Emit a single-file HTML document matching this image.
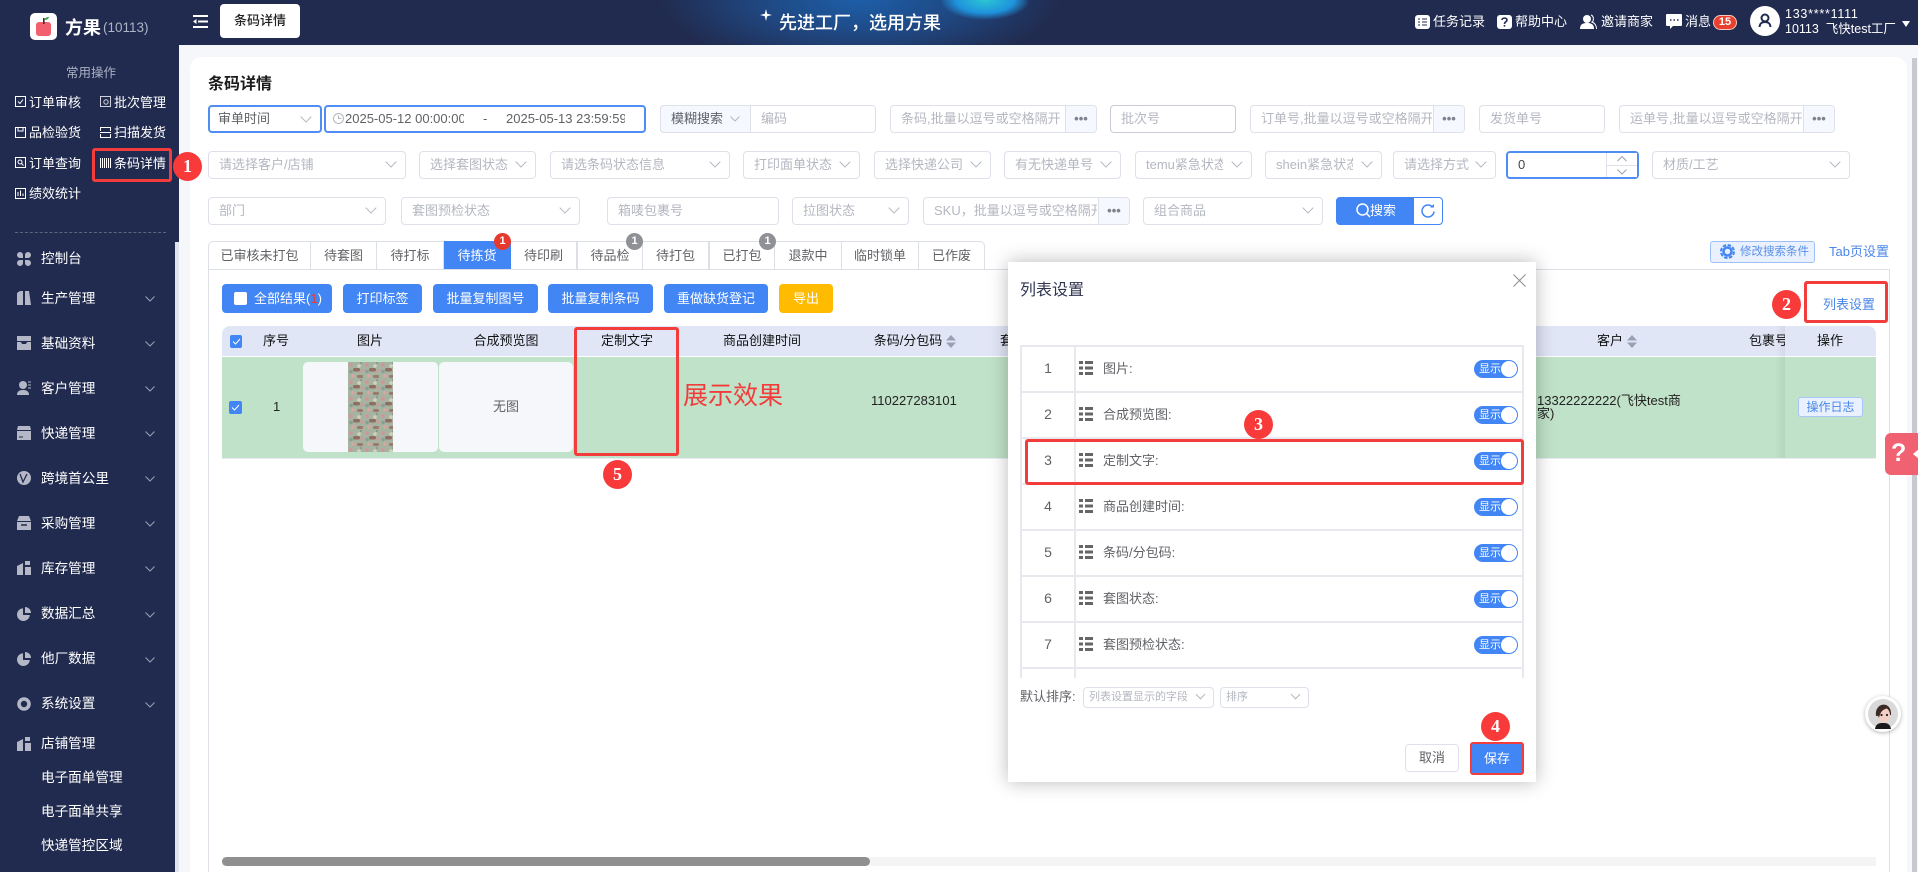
<!DOCTYPE html>
<html lang="zh"><head><meta charset="utf-8"><title>条码详情</title>
<style>
html,body{margin:0;padding:0;width:1918px;height:872px;overflow:hidden;background:#f5f7fb}
body{position:relative;font-family:"Liberation Sans","Noto Sans CJK SC",sans-serif;font-size:13px;color:#222}
div,span,svg{box-sizing:border-box}
.a{position:absolute;white-space:nowrap}
.t{position:absolute;white-space:nowrap;line-height:18px}
.q{color:#fff;font-size:13px}
.n{color:#fff;font-size:13.6px;margin-top:1px}
.f{position:absolute;height:28px;background:#fff;border:1px solid #dfe1ea;border-radius:4px;color:#b4b7c0;font-size:13px;line-height:26px;padding-left:10px;white-space:nowrap;overflow:hidden}
.f.s::after{content:"";position:absolute;right:10px;top:6px;width:7px;height:7px;border-right:1px solid #b4b7c0;border-bottom:1px solid #b4b7c0;transform:rotate(45deg);background:#fff}
.f.sm{height:21px;font-size:11px;line-height:19px;padding-left:5px}
.f.sm::after{top:3px;right:9px;width:6px;height:6px}
.mask{position:absolute;right:0;top:0;bottom:0;width:32px;background:#fff}
.d{position:absolute;top:0;bottom:0;right:0;width:31px;background:#f5f8ff;border-left:1px solid #dfe1ea;color:#80838e;font-size:13px;font-weight:bold;line-height:26px;text-align:center;letter-spacing:0}
.b{position:absolute;top:284px;height:29px;background:#4285f4;border-radius:4px;color:#fff;font-size:13px;line-height:29px;text-align:center}
.tab{position:absolute;top:241px;height:29px;border:1px solid #dcdfe6;border-left:0;background:#fff;color:#606266;font-size:13px;line-height:27px;text-align:center}
.h{position:absolute;top:332px;line-height:18px;color:#111;font-size:13px;white-space:nowrap;transform:translateX(-50%)}
.r{position:absolute;width:29px;height:29px;border-radius:50%;background:#f83a3a;color:#fff;font:bold 18px/29px "Liberation Serif",serif;text-align:center;z-index:9}
.rb{position:absolute;border:3px solid #f33c3c;border-radius:3px;z-index:8}
.g{position:absolute;width:17px;height:17px;border-radius:50%;background:#8f9196;color:#fff;font:bold 11px/17px "Liberation Sans",sans-serif;text-align:center;z-index:3}
.row{position:absolute;left:1020px;width:504px;height:46px;border:1px solid #e8e9ee;border-width:0 2px 2px 2px;background:#fff}
.row .no{position:absolute;left:0;width:54px;top:0;height:44px;border-right:2px solid #e8e9ee;text-align:center;line-height:42px;color:#606266;font-size:14px}
.row .lb{position:absolute;left:81px;top:13px;line-height:18px;color:#606266;font-size:13px;white-space:nowrap}
.row svg{position:absolute;left:57px;top:14px}
.row .tg{position:absolute;left:452px;top:13px;width:44px;height:18px;border-radius:9px;background:#4285f4;color:#fff;font-size:11px;line-height:18px;padding-left:5px}
.row .tg i{position:absolute;right:1px;top:1px;width:16px;height:16px;border-radius:50%;background:#fff}
</style></head><body>

<!-- top bar -->
<div class="a" style="left:0;top:0;width:1918px;height:45px;background:#212b4f"></div>
<div class="a" style="left:660px;top:0;width:400px;height:45px;background:radial-gradient(ellipse 200px 70px at 50% 0,#1d5ea8 0,#1f4a86 45%,rgba(33,43,79,0) 100%)"></div>
<div class="a" style="left:940px;top:0;width:90px;height:22px;background:radial-gradient(ellipse 45px 20px at 50% 0,#2bc6d4 0,#1f93dc 65%,rgba(31,147,220,0) 100%)"></div>
<div class="t" style="left:779px;top:12px;font-size:18px;line-height:22px;color:#fff;font-weight:500">先进工厂，选用方果</div>
<svg class="a" style="left:760px;top:9px" width="12" height="12"><path d="M6 0L7.2 4.8 12 6 7.2 7.2 6 12 4.8 7.2 0 6 4.8 4.8Z" fill="#fff"/></svg>

<!-- sidebar -->
<div class="a" style="left:0;top:45px;width:175px;height:827px;background:#212b4f"></div>
<div class="a" style="left:175px;top:45px;width:4px;height:197px;background:#212b4f"></div>
<div class="a" style="left:175px;top:242px;width:4px;height:630px;background:#e0e3ee"></div>

<svg class="a" style="left:30px;top:13px" width="27" height="27"><rect width="27" height="27" rx="5" fill="#fff"/><rect x="6" y="9" width="15" height="14" rx="3" fill="#f2606e"/><rect x="13" y="5" width="1.6" height="6" fill="#333"/><path d="M14.5 7C15 4.5 17 4 19 4 18.5 6 17 7 14.5 7Z" fill="#3fa34d"/></svg>
<div class="t" style="left:65px;top:16px;font-size:18px;line-height:24px;font-weight:bold;color:#fff">方果</div>
<div class="t" style="left:103px;top:18px;font-size:13.5px;line-height:20px;color:#aeb4c8">(10113)</div>
<svg class="a" style="left:192px;top:14px" width="17" height="15"><path d="M1 2H16M6 7.5H16M1 13H16" stroke="#fff" stroke-width="2"/><path d="M4.5 5L1 7.5 4.5 10Z" fill="#fff"/></svg>
<div class="a" style="left:220px;top:4px;width:80px;height:34px;background:#fff;border-radius:4px;text-align:center;line-height:34px;font-size:13px;font-weight:500;color:#222">条码详情</div>

<div class="t" style="left:66px;top:64px;font-size:12.5px;color:#aab0c4">常用操作</div>
<svg class="a" style="left:15px;top:96px" width="11" height="11"><rect x=".5" y=".5" width="10" height="10" fill="none" stroke="#fff"/><path d="M3 5.5L5 7.5 8 3.5" fill="none" stroke="#fff"/></svg>
<div class="t q" style="left:29px;top:94px">订单审核</div>
<svg class="a" style="left:100px;top:96px" width="11" height="11"><rect x=".5" y=".5" width="10" height="10" fill="none" stroke="#cfd2dc"/><circle cx="6" cy="6" r="2.2" fill="none" stroke="#cfd2dc"/></svg>
<div class="t q" style="left:114px;top:94px">批次管理</div>
<svg class="a" style="left:15px;top:127px" width="11" height="11"><path d="M.5.5H10.5V10.5H.5ZM3 .5V4H8V.5" fill="none" stroke="#fff"/></svg>
<div class="t q" style="left:29px;top:124px">品检验货</div>
<svg class="a" style="left:100px;top:127px" width="11" height="11"><path d="M.5 4V.5H10.5V4M.5 7V10.5H10.5V7M0 5.5H11" fill="none" stroke="#fff"/></svg>
<div class="t q" style="left:114px;top:124px">扫描发货</div>
<svg class="a" style="left:15px;top:157px" width="11" height="11"><rect x=".5" y=".5" width="10" height="10" fill="none" stroke="#fff"/><circle cx="5" cy="5" r="2" fill="none" stroke="#fff"/><path d="M6.5 6.5L8.5 8.5" stroke="#fff"/></svg>
<div class="t q" style="left:29px;top:155px">订单查询</div>
<svg class="a" style="left:100px;top:158px" width="11" height="10"><path d="M.5 0V10M2.5 0V10M4.5 0V10M6.5 0V10M8.5 0V10M10.5 0V10" stroke="#fff"/></svg>
<div class="t q" style="left:114px;top:155px">条码详情</div>
<svg class="a" style="left:15px;top:188px" width="11" height="11"><rect x=".5" y=".5" width="10" height="10" fill="none" stroke="#fff"/><path d="M3 4V8M5.5 2.5V8M8 5.5V8" stroke="#fff"/></svg>
<div class="t q" style="left:29px;top:185px">绩效统计</div>
<div class="a" style="left:15px;top:232px;width:151px;height:0;border-top:1px dashed #5d6580"></div>

<div class="rb" style="left:92px;top:148px;width:80px;height:34px"></div>
<div class="r" style="left:173px;top:152px">1</div>

<svg class="a" style="left:17px;top:252px" width="14" height="14"><path d="M0 3a3 3 0 016 0v3H3a3 3 0 01-3-3ZM14 3a3 3 0 00-6 0v3h3a3 3 0 003-3ZM0 11a3 3 0 003 3 3 3 0 003-3V8H3a3 3 0 00-3 3ZM14 11a3 3 0 01-3 3 3 3 0 01-3-3V8h3a3 3 0 013 3Z" fill="#b4b8c6"/></svg>
<div class="t n" style="left:41px;top:249px">控制台</div>

<svg class="a" style="left:17px;top:291px" width="14" height="14"><path d="M0 14V2L3 0H6V14ZM8 14V0H12L14 14Z" fill="#b4b8c6"/></svg>
<div class="t n" style="left:41px;top:289px">生产管理</div>
<svg class="a" style="left:17px;top:336px" width="14" height="14"><path d="M0 0H14V5H0ZM0 6H4L5 8H9L10 6H14V14H0Z" fill="#b4b8c6"/></svg>
<div class="t n" style="left:41px;top:334px">基础资料</div>
<svg class="a" style="left:17px;top:381px" width="14" height="14"><circle cx="6" cy="4" r="4" fill="#b4b8c6"/><path d="M0 14C0 10 3 9 6 9S12 10 12 14Z" fill="#b4b8c6"/><path d="M11 1H14M11 4H14M11 7H14" stroke="#b4b8c6"/></svg>
<div class="t n" style="left:41px;top:379px">客户管理</div>
<svg class="a" style="left:17px;top:426px" width="14" height="14"><path d="M1 0H13L14 4H0ZM0 5H14V14H0Z" fill="#b4b8c6"/><path d="M2 11H6" stroke="#212b4f"/></svg>
<div class="t n" style="left:41px;top:424px">快递管理</div>
<svg class="a" style="left:17px;top:471px" width="14" height="14"><circle cx="7" cy="7" r="7" fill="#b4b8c6"/><path d="M3 3L6 11 10 3" fill="none" stroke="#212b4f" stroke-width="1.3"/></svg>
<div class="t n" style="left:41px;top:469px">跨境首公里</div>
<svg class="a" style="left:17px;top:516px" width="14" height="14"><path d="M2 0H12L14 5H0ZM0 6H14V14H0Z" fill="#b4b8c6"/><path d="M4 9H10" stroke="#212b4f" stroke-width="1.5"/></svg>
<div class="t n" style="left:41px;top:514px">采购管理</div>
<svg class="a" style="left:17px;top:561px" width="14" height="14"><path d="M0 5L6 2V14H0ZM8 0H13V4H8ZM8 6H14V14H8Z" fill="#b4b8c6"/></svg>
<div class="t n" style="left:41px;top:559px">库存管理</div>
<svg class="a" style="left:17px;top:607px" width="14" height="14"><path d="M6 1.2A6.4 6.4 0 1012.8 8H6Z" fill="#b4b8c6"/><path d="M8 0A6 6 0 0114 6H8Z" fill="#b4b8c6"/></svg>
<div class="t n" style="left:41px;top:604px">数据汇总</div>
<svg class="a" style="left:17px;top:652px" width="14" height="14"><path d="M6 1.2A6.4 6.4 0 1012.8 8H6Z" fill="#b4b8c6"/><path d="M8 0A6 6 0 0114 6H8Z" fill="#b4b8c6"/></svg>
<div class="t n" style="left:41px;top:649px">他厂数据</div>
<svg class="a" style="left:17px;top:697px" width="14" height="14"><circle cx="7" cy="7" r="5" fill="none" stroke="#b4b8c6" stroke-width="3.6"/></svg>
<div class="t n" style="left:41px;top:694px">系统设置</div>
<svg class="a" style="left:17px;top:737px" width="14" height="14"><path d="M0 5L6 2V14H0ZM8 0H13V4H8ZM8 6H14V14H8Z" fill="#b4b8c6"/></svg>
<div class="t n" style="left:41px;top:734px">店铺管理</div>
<div class="t n" style="left:41px;top:768px">电子面单管理</div>
<div class="t n" style="left:41px;top:802px">电子面单共享</div>
<div class="t n" style="left:41px;top:836px">快递管控区域</div>

<svg class="a" style="left:145px;top:296px" width="10" height="6"><path d="M.5.5L5 5 9.5.5" fill="none" stroke="#9aa0b4"/></svg>
<svg class="a" style="left:145px;top:341px" width="10" height="6"><path d="M.5.5L5 5 9.5.5" fill="none" stroke="#9aa0b4"/></svg>
<svg class="a" style="left:145px;top:386px" width="10" height="6"><path d="M.5.5L5 5 9.5.5" fill="none" stroke="#9aa0b4"/></svg>
<svg class="a" style="left:145px;top:431px" width="10" height="6"><path d="M.5.5L5 5 9.5.5" fill="none" stroke="#9aa0b4"/></svg>
<svg class="a" style="left:145px;top:476px" width="10" height="6"><path d="M.5.5L5 5 9.5.5" fill="none" stroke="#9aa0b4"/></svg>
<svg class="a" style="left:145px;top:521px" width="10" height="6"><path d="M.5.5L5 5 9.5.5" fill="none" stroke="#9aa0b4"/></svg>
<svg class="a" style="left:145px;top:566px" width="10" height="6"><path d="M.5.5L5 5 9.5.5" fill="none" stroke="#9aa0b4"/></svg>
<svg class="a" style="left:145px;top:612px" width="10" height="6"><path d="M.5.5L5 5 9.5.5" fill="none" stroke="#9aa0b4"/></svg>
<svg class="a" style="left:145px;top:657px" width="10" height="6"><path d="M.5.5L5 5 9.5.5" fill="none" stroke="#9aa0b4"/></svg>
<svg class="a" style="left:145px;top:702px" width="10" height="6"><path d="M.5.5L5 5 9.5.5" fill="none" stroke="#9aa0b4"/></svg>

<!-- top-right -->
<svg class="a" style="left:1415px;top:15px" width="15" height="14"><rect width="15" height="14" rx="3" fill="#fff"/><path d="M3 4H5M7 4H12M3 7H5M7 7H12M3 10H5M7 10H12" stroke="#212b4f"/></svg>
<div class="t q" style="left:1433px;top:13px">任务记录</div>
<svg class="a" style="left:1497px;top:15px" width="15" height="14"><rect width="15" height="14" rx="3" fill="#fff"/><path d="M5 5C5 2.5 10 2.5 10 5 10 7 7.5 6.5 7.5 9" fill="none" stroke="#212b4f" stroke-width="1.6"/><rect x="6.7" y="10" width="1.6" height="1.6" fill="#212b4f"/></svg>
<div class="t q" style="left:1515px;top:13px">帮助中心</div>
<svg class="a" style="left:1580px;top:14px" width="17" height="15"><circle cx="7" cy="5" r="4" fill="#fff"/><path d="M0 15C0 10 3 9 7 9S14 10 14 15Z" fill="#fff"/><path d="M11 1C14 2 14 7 12 8 15 9 16.500 12 16.500 15" fill="none" stroke="#fff"/></svg>
<div class="t q" style="left:1601px;top:13px">邀请商家</div>
<svg class="a" style="left:1666px;top:14px" width="16" height="16"><path d="M1 0H15Q16 0 16 1V11Q16 12 15 12H7L4 15V12H1Q0 12 0 11V1Q0 0 1 0Z" fill="#fff"/><path d="M4 6H5.500M7.500 6H9M11 6H12.500" stroke="#212b4f" stroke-width="1.5"/></svg>
<div class="t q" style="left:1685px;top:13px">消息</div>
<div class="a" style="left:1713px;top:15px;width:24px;height:15px;background:#e8402f;border:1px solid #f7c7c0;border-radius:8px;color:#fff;font-size:11px;font-weight:bold;line-height:13px;text-align:center">15</div>
<div class="a" style="left:1750px;top:6px;width:30px;height:30px;border-radius:50%;background:#fff"></div>
<svg class="a" style="left:1758px;top:13px" width="14" height="15"><circle cx="7" cy="5" r="3.500" fill="none" stroke="#212b4f" stroke-width="2"/><path d="M1.500 14C2 10 4 9 7 9S12 10 12.500 14" fill="none" stroke="#212b4f" stroke-width="2"/></svg>
<div class="t" style="left:1785px;top:6px;color:#fff;font-size:12.5px;line-height:16px;letter-spacing:.75px">133****1111</div>
<div class="t" style="left:1785px;top:21px;color:#fff;font-size:12.5px;line-height:16px">10113&nbsp; 飞快test工厂</div>
<div class="a" style="left:1902px;top:21px;width:0;height:0;border:4.500px solid transparent;border-top:6px solid #fff"></div>

<!-- main card -->
<div class="a" style="left:190px;top:57px;width:1717px;height:815px;background:#fff;border-radius:12px 12px 0 0"></div>
<div class="a" style="left:1912px;top:58px;width:5px;height:814px;background:#c8c9d0"></div>

<div class="t" style="left:208px;top:74px;font-size:16px;line-height:22px;font-weight:bold;color:#1c1c1c">条码详情</div>

<!-- row 1 -->
<div class="f s" style="left:208px;top:105px;width:114px;border:2px solid #4f8df5;color:#606266;line-height:24px;padding-left:8px">审单时间</div>
<div class="f" style="left:324px;top:105px;width:322px;border:2px solid #4f8df5"></div>
<svg class="a" style="left:333px;top:113px" width="11" height="11"><circle cx="5.500" cy="5.500" r="5" fill="none" stroke="#b4b7c0"/><path d="M5.500 2.500V5.500H8.500" fill="none" stroke="#b4b7c0"/></svg>
<div class="a" style="left:345px;top:110px;width:119px;height:18px;overflow:hidden;line-height:18px;color:#606266">2025-05-12 00:00:00</div>
<div class="t" style="left:483px;top:110px;color:#606266">-</div>
<div class="a" style="left:506px;top:110px;width:119px;height:18px;overflow:hidden;line-height:18px;color:#606266">2025-05-13 23:59:59</div>
<div class="f" style="left:660px;top:105px;width:216px;padding-left:100px">编码</div>
<div class="a" style="left:660px;top:105px;width:91px;height:28px;background:#f5f8ff;border:1px solid #dfe1ea;border-radius:4px 0 0 4px;color:#606266;line-height:26px;padding-left:10px">模糊搜索</div>
<svg class="a" style="left:730px;top:116px" width="10" height="6"><path d="M.5.5L5 5 9.5.5" fill="none" stroke="#b4b7c0"/></svg>
<div class="f" style="left:890px;top:105px;width:207px">条码,批量以逗号或空格隔开<div class="d">•••</div></div>
<div class="f" style="left:1110px;top:105px;width:126px;border-color:#c9cbd6">批次号</div>
<div class="f" style="left:1250px;top:105px;width:215px">订单号,批量以逗号或空格隔开<div class="mask"></div><div class="d">•••</div></div>
<div class="f" style="left:1479px;top:105px;width:126px">发货单号</div>
<div class="f" style="left:1619px;top:105px;width:216px">运单号,批量以逗号或空格隔开<div class="mask"></div><div class="d">•••</div></div>

<!-- row 2 -->
<div class="f s" style="left:208px;top:151px;width:198px">请选择客户/店铺</div>
<div class="f s" style="left:419px;top:151px;width:117px">选择套图状态</div>
<div class="f s" style="left:550px;top:151px;width:180px">请选条码状态信息</div>
<div class="f s" style="left:743px;top:151px;width:117px">打印面单状态</div>
<div class="f s" style="left:874px;top:151px;width:117px">选择快递公司</div>
<div class="f s" style="left:1004px;top:151px;width:117px">有无快递单号</div>
<div class="f s" style="left:1135px;top:151px;width:117px"><div class="a" style="left:10px;top:0;width:77px;overflow:hidden">temu紧急状态</div></div>
<div class="f s" style="left:1265px;top:151px;width:117px"><div class="a" style="left:10px;top:0;width:77px;overflow:hidden">shein紧急状态</div></div>
<div class="f s" style="left:1393px;top:151px;width:103px">请选择方式</div>
<div class="f" style="left:1506px;top:151px;width:133px;border:2px solid #4f8df5;color:#444;line-height:24px">0</div>
<div class="a" style="left:1606px;top:153px;width:31px;height:24px;background:#fff;border-left:1px solid #dfe1ea"></div>
<div class="a" style="left:1606px;top:165px;width:31px;height:1px;background:#dfe1ea"></div>
<svg class="a" style="left:1617px;top:156px" width="10" height="6"><path d="M.5 5L5 .5 9.500 5" fill="none" stroke="#9aa0b4"/></svg>
<svg class="a" style="left:1617px;top:169px" width="10" height="6"><path d="M.5.5L5 5 9.500.5" fill="none" stroke="#9aa0b4"/></svg>
<div class="f s" style="left:1652px;top:151px;width:198px">材质/工艺</div>

<!-- row 3 -->
<div class="f s" style="left:208px;top:197px;width:178px">部门</div>
<div class="f s" style="left:401px;top:197px;width:179px">套图预检状态</div>
<div class="f" style="left:607px;top:197px;width:172px">箱唛包裹号</div>
<div class="f s" style="left:792px;top:197px;width:117px">拉图状态</div>
<div class="f" style="left:923px;top:197px;width:207px">SKU，批量以逗号或空格隔开<div class="mask"></div><div class="d">•••</div></div>
<div class="f s" style="left:1143px;top:197px;width:180px">组合商品</div>
<div class="a" style="left:1336px;top:197px;width:77px;height:28px;background:#4285f4;border-radius:4px 0 0 4px;color:#fff;line-height:28px;padding-left:34px">搜索</div>
<svg class="a" style="left:1356px;top:203px" width="15" height="15"><circle cx="6.500" cy="6.500" r="5.500" fill="none" stroke="#fff" stroke-width="1.500"/><path d="M10.500 10.500L14 14" stroke="#fff" stroke-width="1.500"/></svg>
<div class="a" style="left:1413px;top:197px;width:30px;height:28px;background:#fff;border:1px solid #4285f4;border-radius:0 4px 4px 0"></div>
<svg class="a" style="left:1421px;top:204px" width="14" height="14"><path d="M11.500 3A6 6 0 1 0 13 7.500" fill="none" stroke="#4285f4" stroke-width="1.500"/><path d="M9 3.500H13V0Z" fill="#4285f4"/></svg>

<!-- tabs -->
<div class="tab" style="left:208px;width:103px;border-left:1px solid #dcdfe6;border-radius:5px 0 0 0">已审核未打包</div>
<div class="tab" style="left:311px;width:66px">待套图</div>
<div class="tab" style="left:377px;width:67px">待打标</div>
<div class="tab" style="left:444px;width:67px;background:#4285f4;border-color:#4285f4;color:#fff">待拣货</div>
<div class="tab" style="left:511px;width:66px">待印刷</div>
<div class="tab" style="left:577px;width:66px;border-left:1px solid #dcdfe6">待品检</div>
<div class="tab" style="left:643px;width:66px">待打包</div>
<div class="tab" style="left:709px;width:66px;border-left:1px solid #dcdfe6">已打包</div>
<div class="tab" style="left:775px;width:67px">退款中</div>
<div class="tab" style="left:842px;width:77px">临时锁单</div>
<div class="tab" style="left:919px;width:66px;border-radius:0 5px 0 0">已作废</div>
<div class="g" style="left:494px;top:233px;background:#e8392f">1</div>
<div class="g" style="left:626px;top:233px">1</div>
<div class="g" style="left:759px;top:233px">1</div>

<div class="a" style="left:1710px;top:241px;width:105px;height:22px;background:#e9f1fe;border:1px solid #9fc0f7;border-radius:3px;color:#5b8fe8;font-size:11.500px;line-height:20px;padding-left:29px">修改搜索条件</div>
<svg class="a" style="left:1720px;top:244px" width="15" height="15"><circle cx="7.500" cy="7.500" r="6.500" fill="none" stroke="#4285f4" stroke-width="2" stroke-dasharray="3.500 1.600"/><circle cx="7.500" cy="7.500" r="4" fill="none" stroke="#4285f4" stroke-width="2.500"/></svg>
<div class="t" style="left:1829px;top:243px;color:#4a86e8;font-size:13px">Tab页设置</div>

<!-- tab panel -->
<div class="a" style="left:208px;top:269px;width:1682px;height:603px;border:1px solid #dcdfe6;border-bottom:0;z-index:0"></div>

<div class="b" style="left:222px;width:110px;padding-left:22px">全部结果(<span style="color:#e8392f">1</span>)</div>
<div class="a" style="left:234px;top:292px;width:13px;height:13px;background:#fff;border-radius:2px"></div>
<div class="b" style="left:343px;width:79px">打印标签</div>
<div class="b" style="left:433px;width:105px">批量复制图号</div>
<div class="b" style="left:548px;width:105px">批量复制条码</div>
<div class="b" style="left:664px;width:104px">重做缺货登记</div>
<div class="b" style="left:779px;width:54px;background:#ffbb00">导出</div>

<!-- 列表设置 -->
<div class="rb" style="left:1804px;top:281px;width:84px;height:42px"></div>
<div class="t" style="left:1823px;top:296px;color:#4a86e8;font-size:13px">列表设置</div>
<div class="r" style="left:1772px;top:290px">2</div>

<!-- table -->
<div class="a" style="left:222px;top:326px;width:1654px;height:30px;background:#e1e6f6;border-radius:8px 8px 0 0"></div>
<div class="a" style="left:222px;top:357px;width:1654px;height:101px;background:#c0e2c8"></div>
<div class="a" style="left:222px;top:458px;width:1654px;height:1px;background:#e8ebf2"></div>
<div class="a" style="left:1775px;top:326px;width:10px;height:132px;background:linear-gradient(90deg,rgba(0,0,0,0),rgba(0,0,0,.06))"></div>

<div class="a" style="left:230px;top:335px;width:12px;height:13px;background:#4285f4;border-radius:2px"></div>
<svg class="a" style="left:232px;top:338px" width="9" height="7"><path d="M1 3.500L3.500 6 8 1" fill="none" stroke="#fff"/></svg>
<div class="h" style="left:276px">序号</div>
<div class="h" style="left:370px">图片</div>
<div class="h" style="left:506px">合成预览图</div>
<div class="h" style="left:627px">定制文字</div>
<div class="h" style="left:762px">商品创建时间</div>
<div class="h" style="left:908px">条码/分包码</div>
<svg class="a" style="left:946px;top:335px" width="10" height="13"><path d="M5 0L10 5.500H0ZM5 13L0 7.500H10Z" fill="#9aa0b4"/></svg>
<div class="h" style="left:1026px">套图状态</div>
<div class="h" style="left:1610px">客户</div>
<svg class="a" style="left:1627px;top:335px" width="10" height="13"><path d="M5 0L10 5.500H0ZM5 13L0 7.500H10Z" fill="#9aa0b4"/></svg>
<div class="a" style="left:1749px;top:332px;width:36px;height:18px;overflow:hidden;line-height:18px;color:#111">包裹号</div>
<div class="h" style="left:1830px">操作</div>

<div class="a" style="left:229px;top:401px;width:13px;height:13px;background:#4285f4;border-radius:2px"></div>
<svg class="a" style="left:231px;top:404px" width="9" height="7"><path d="M1 3.500L3.500 6 8 1" fill="none" stroke="#fff"/></svg>
<div class="t" style="left:273px;top:398px;font-size:13px;color:#222">1</div>
<div class="a" style="left:303px;top:362px;width:135px;height:90px;background:#f5f7fb;border-radius:5px"></div>
<svg class="a" style="left:348px;top:362px" width="45" height="90"><defs><pattern id="fl" width="16" height="17" patternUnits="userSpaceOnUse"><rect width="16" height="17" fill="#a7b2a0"/><circle cx="3" cy="3" r="1.600" fill="#d98f96"/><circle cx="11" cy="4" r="1.800" fill="#cfd3bd"/><rect x="5" y="6" width="7" height="3.500" rx="1.700" fill="#8f6f62"/><circle cx="14" cy="9" r="1.400" fill="#dc929a"/><circle cx="3" cy="9.500" r="1.800" fill="#86a094"/><rect x="9" y="13" width="6" height="3" rx="1.500" fill="#9a7a6c"/><circle cx="5" cy="14" r="1.700" fill="#d9a5a5"/><circle cx="13" cy="1" r="1" fill="#7b978a"/></pattern></defs><rect width="45" height="90" fill="url(#fl)"/></svg>
<div class="a" style="left:439px;top:362px;width:134px;height:90px;background:#f5f7fb;border-radius:5px"></div>
<div class="t" style="left:493px;top:398px;font-size:13px;color:#606266">无图</div>
<div class="rb" style="left:574px;top:327px;width:105px;height:129px"></div>
<div class="r" style="left:603px;top:460px">5</div>
<div class="t" style="left:683px;top:380px;font-size:25px;line-height:32px;color:#f23c3c">展示效果</div>
<div class="t" style="left:871px;top:392px;font-size:13px;color:#222">110227283101</div>
<div class="a" style="left:1537px;top:394px;width:150px;line-height:13px;font-size:13px;color:#222;white-space:normal;word-break:break-all">13322222222(飞快test商家)</div>
<div class="a" style="left:1798px;top:397px;width:65px;height:20px;background:#e9f1fe;border:1px solid #a9c6f8;border-radius:3px;color:#4a86e8;font-size:12px;line-height:18px;text-align:center">操作日志</div>

<!-- horizontal scrollbar -->
<div class="a" style="left:222px;top:857px;width:1654px;height:9px;background:#f4f4f4"></div>
<div class="a" style="left:222px;top:857px;width:648px;height:9px;background:#8f8f8f;border-radius:5px"></div>

<!-- side floats -->
<div class="a" style="left:1885px;top:433px;width:33px;height:42px;background:#f06272;border-radius:6px 0 0 6px;z-index:4;color:#fff;font-size:25px;font-weight:bold;line-height:40px;padding-left:6px">?</div>
<div class="a" style="left:1913px;top:449px;width:0;height:0;border:5px solid transparent;border-right:6px solid #fff;border-left:0;z-index:5"></div>
<div class="a" style="left:1865px;top:696px;width:36px;height:36px;border-radius:50%;background:#fff;box-shadow:0 1px 4px rgba(0,0,0,.3);z-index:4"></div>
<svg class="a" style="left:1868px;top:699px;z-index:5" width="30" height="30"><circle cx="15" cy="15" r="15" fill="#d9d9d9"/><path d="M8 17C6 3 24 1 23 16Z" fill="#3b2a26"/><ellipse cx="16" cy="16" rx="6" ry="7.500" fill="#f4cfc4"/><path d="M9 14C10 7 17 5 21 9 17 10 13 10 11 19Z" fill="#3b2a26"/><path d="M7 30C8 24 12 24 15 24S22 24 23 30Z" fill="#1a1a1a"/><circle cx="13.500" cy="16" r="1.100" fill="#222"/><circle cx="19" cy="16" r="1.100" fill="#222"/></svg>

<!-- dialog -->
<div class="a" style="left:1008px;top:262px;width:528px;height:520px;background:#fff;box-shadow:0 0 18px rgba(0,0,0,.28);z-index:6">
</div>
<div style="position:absolute;left:0;top:0;z-index:7">
<div class="t" style="left:1020px;top:280px;font-size:16px;line-height:22px;color:#303550">列表设置</div>
<svg class="a" style="left:1513px;top:274px" width="13" height="13"><path d="M.5.5L12.500 12.500M12.500.5L.5 12.500" stroke="#8a8d96"/></svg>

<div class="a" style="left:1020px;top:345px;width:504px;height:333px;overflow:hidden">
<div class="a" style="left:0;top:0;width:504px;height:2px;background:#e8e9ee"></div>
<div class="row" style="left:0;top:2px"><div class="no">1</div><svg width="14" height="14"><path d="M0 1.500H4M0 7H4M0 12.500H4" stroke="#666" stroke-width="3"/><path d="M6 1.500H14M6 7H14M6 12.500H14" stroke="#666" stroke-width="3"/></svg><div class="lb">图片:</div><div class="tg">显示<i></i></div></div>
<div class="row" style="left:0;top:48px"><div class="no">2</div><svg width="14" height="14"><path d="M0 1.500H4M0 7H4M0 12.500H4" stroke="#666" stroke-width="3"/><path d="M6 1.500H14M6 7H14M6 12.500H14" stroke="#666" stroke-width="3"/></svg><div class="lb">合成预览图:</div><div class="tg">显示<i></i></div></div>
<div class="row" style="left:0;top:94px"><div class="no">3</div><svg width="14" height="14"><path d="M0 1.500H4M0 7H4M0 12.500H4" stroke="#666" stroke-width="3"/><path d="M6 1.500H14M6 7H14M6 12.500H14" stroke="#666" stroke-width="3"/></svg><div class="lb">定制文字:</div><div class="tg">显示<i></i></div></div>
<div class="row" style="left:0;top:140px"><div class="no">4</div><svg width="14" height="14"><path d="M0 1.500H4M0 7H4M0 12.500H4" stroke="#666" stroke-width="3"/><path d="M6 1.500H14M6 7H14M6 12.500H14" stroke="#666" stroke-width="3"/></svg><div class="lb">商品创建时间:</div><div class="tg">显示<i></i></div></div>
<div class="row" style="left:0;top:186px"><div class="no">5</div><svg width="14" height="14"><path d="M0 1.500H4M0 7H4M0 12.500H4" stroke="#666" stroke-width="3"/><path d="M6 1.500H14M6 7H14M6 12.500H14" stroke="#666" stroke-width="3"/></svg><div class="lb">条码/分包码:</div><div class="tg">显示<i></i></div></div>
<div class="row" style="left:0;top:232px"><div class="no">6</div><svg width="14" height="14"><path d="M0 1.500H4M0 7H4M0 12.500H4" stroke="#666" stroke-width="3"/><path d="M6 1.500H14M6 7H14M6 12.500H14" stroke="#666" stroke-width="3"/></svg><div class="lb">套图状态:</div><div class="tg">显示<i></i></div></div>
<div class="row" style="left:0;top:278px"><div class="no">7</div><svg width="14" height="14"><path d="M0 1.500H4M0 7H4M0 12.500H4" stroke="#666" stroke-width="3"/><path d="M6 1.500H14M6 7H14M6 12.500H14" stroke="#666" stroke-width="3"/></svg><div class="lb">套图预检状态:</div><div class="tg">显示<i></i></div></div>
<div class="row" style="left:0;top:324px"><div class="no"></div></div>
</div>

<div class="rb" style="left:1025px;top:439px;width:499px;height:46px;z-index:8"></div>
<div class="r" style="left:1244px;top:410px">3</div>

<div class="t" style="left:1020px;top:688px;font-size:13px;color:#606266">默认排序:</div>
<div class="f s sm" style="left:1083px;top:687px;width:131px">列表设置显示的字段</div>
<div class="f s sm" style="left:1220px;top:687px;width:89px">排序</div>

<div class="a" style="left:1405px;top:744px;width:54px;height:28px;background:#fff;border:1px solid #dfe1ea;border-radius:4px;color:#606266;text-align:center;line-height:26px">取消</div>
<div class="a" style="left:1470px;top:742px;width:54px;height:33px;background:#4285f4;border:2px solid #f33c3c;border-radius:3px;color:#fff;text-align:center;line-height:29px">保存</div>
<div class="r" style="left:1481px;top:712px">4</div>
</div>

</body></html>
